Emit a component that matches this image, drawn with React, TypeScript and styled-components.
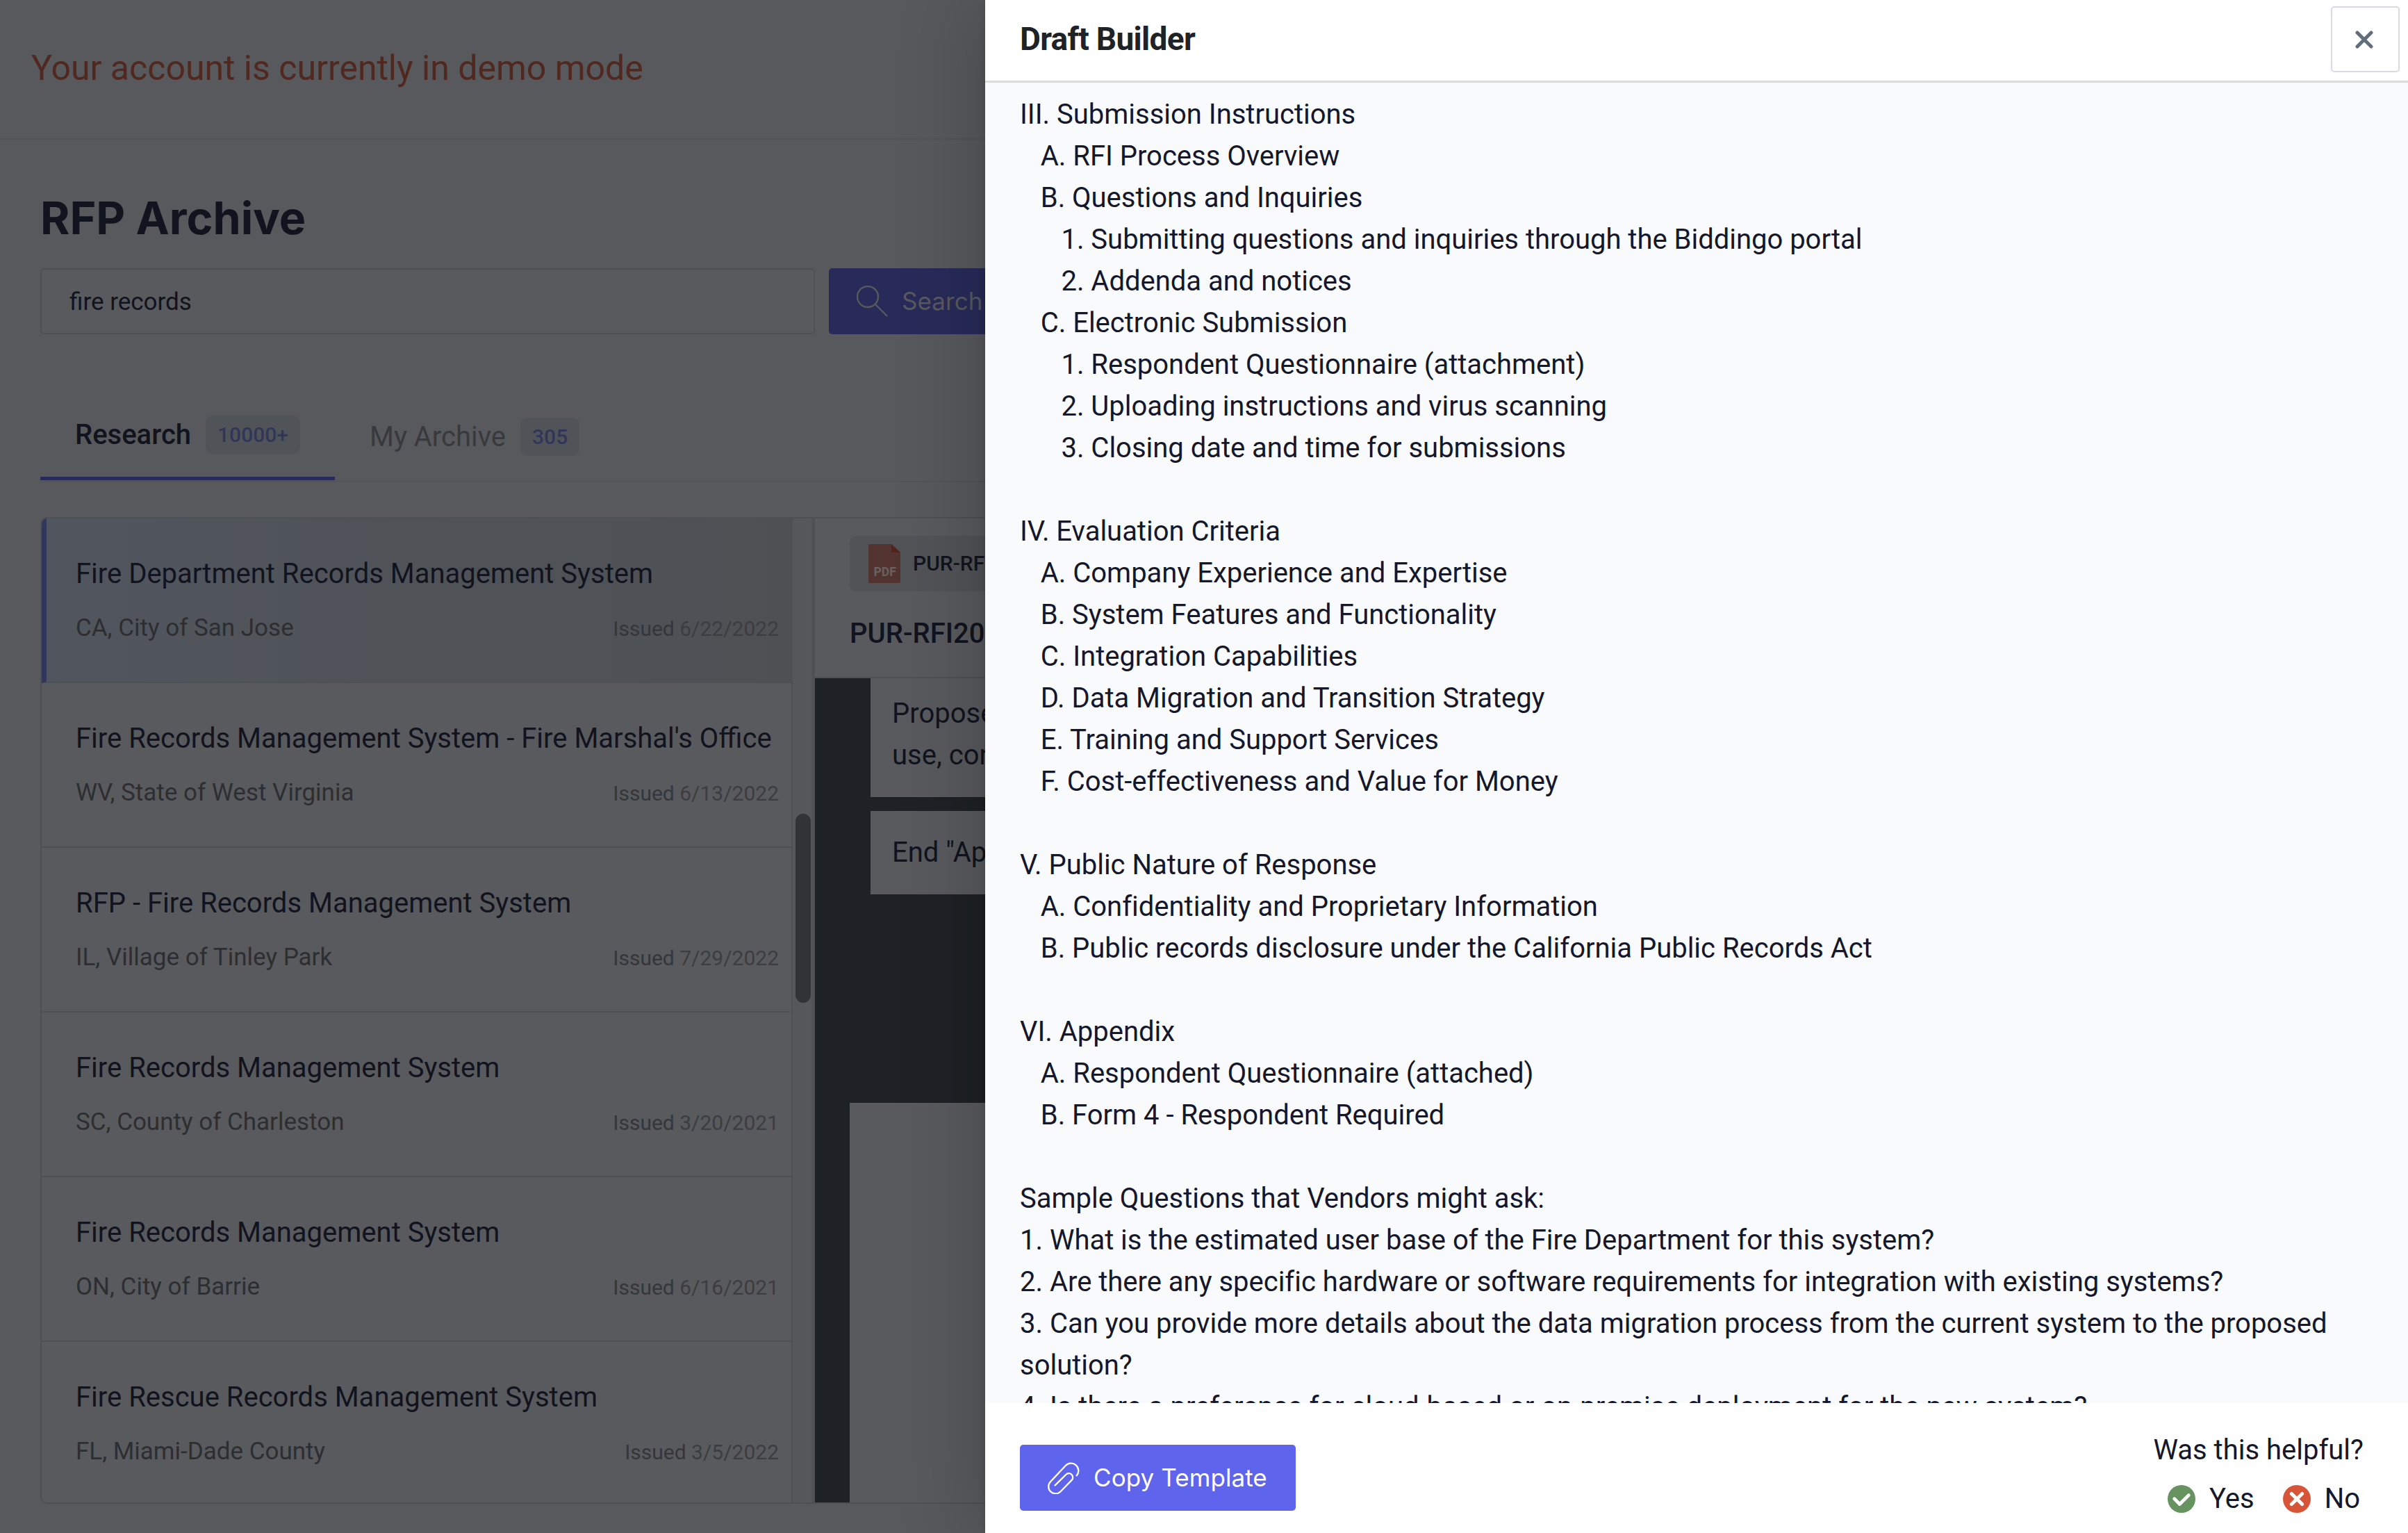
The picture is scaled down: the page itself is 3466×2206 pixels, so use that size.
import React from 'react';
import styled, { createGlobalStyle } from 'styled-components';

const roboto = `Roboto, "Liberation Sans", sans-serif`;
const inter = `Inter, "Liberation Sans", sans-serif`;

const color = {
  page: '#58595c',
  surface: '#595a5d',
  line: '#4f5054',
  ink: '#11131e',
  muted: '#2d2e31',
  faint: '#38393c',
  indigo: '#282b59',
  viewer: '#1e2125',
};

const GlobalStyle = createGlobalStyle`
  *, *::before, *::after { box-sizing: border-box; }
  html, body { margin: 0; padding: 0; }
  body { width: 3466px; height: 2206px; overflow: hidden; background: ${color.page}; font-family: ${roboto}; }
  button, input { font: inherit; margin: 0; }
`;

const Screen = styled.div`
  display: flex;
  width: 3466px;
  height: 2206px;
  overflow: hidden;
`;

const Archive = styled.main`
  width: 1418px;
  flex: none;
  overflow: hidden;
  background: ${color.page};
  color: ${color.ink};
  display: flex;
  flex-direction: column;
`;

const TopBar = styled.header`
  height: 201px;
  flex: none;
  display: flex;
  align-items: center;
  padding: 0 0 3px 45px;
  border-bottom: 2px solid #535457;
`;

const DemoNotice = styled.span`
  font-size: 50px;
  line-height: 60px;
  color: #50281f;
  white-space: nowrap;
`;

const Content = styled.section`
  flex: 1;
  padding: 73px 0 0 58px;
  display: flex;
  flex-direction: column;
`;

const PageTitle = styled.h1`
  margin: 0 0 32px;
  font-family: ${inter};
  font-size: 64.6px;
  line-height: 80px;
  font-weight: 700;
`;

const SearchRow = styled.div`
  display: flex;
  gap: 20px;
  height: 95px;
`;

const SearchInput = styled.input`
  width: 1115px;
  flex: none;
  height: 95px;
  padding: 1px 40px 0;
  border: 2px solid ${color.line};
  border-radius: 5px;
  background: ${color.surface};
  color: ${color.ink};
  font-size: 35px;
  outline: none;
`;

const SolidButton = styled.button<{ $bg: string; $fg: string; $width: number }>`
  flex: none;
  width: ${(p) => p.$width}px;
  height: 95px;
  padding: 0 0 0 40px;
  border: 0;
  border-radius: 5px;
  background: ${(p) => p.$bg};
  color: ${(p) => p.$fg};
  display: flex;
  align-items: center;
  gap: 20px;
  font-family: ${inter};
  font-size: 35px;
  white-space: nowrap;
`;

const ButtonLabel = styled.span`
  line-height: 42px;
  padding-bottom: 2px;
  letter-spacing: 0.08px;
`;

const Tabs = styled.nav`
  margin-top: 81px;
  height: 132px;
  display: flex;
  align-items: flex-start;
  border-bottom: 2px solid #535457;
`;

const Tab = styled.div<{ $active?: boolean }>`
  height: 129px;
  padding: 3px 50px 0;
  display: flex;
  align-items: center;
  gap: 21px;
  font-size: 40px;
  font-weight: ${(p) => (p.$active ? 500 : 400)};
  color: ${(p) => (p.$active ? color.ink : color.faint)};
  border-bottom: ${(p) => (p.$active ? `5px solid ${color.indigo}` : '0')};
  white-space: nowrap;
`;

const Count = styled.span`
  height: 55px;
  padding: 0 17px;
  border-radius: 10px;
  background: #505459;
  color: #313658;
  font-family: ${roboto};
  font-size: 30px;
  line-height: 55px;
  font-weight: 500;
`;

const Panels = styled.div`
  margin-top: 50px;
  width: 1500px;
  height: 1420px;
  display: flex;
  border: 2px solid ${color.line};
  border-radius: 10px;
  overflow: hidden;
  background: ${color.surface};
`;

const ResultList = styled.div`
  width: 1081px;
  flex: none;
  border-right: 2px solid ${color.line};
`;

const Result = styled.article<{ $active?: boolean }>`
  height: 237px;
  padding: 52px 18px 0 ${(p) => (p.$active ? 42 : 49)}px;
  border-bottom: 2px solid ${color.line};
  border-left: ${(p) => (p.$active ? '7px solid #32365a' : '0')};
  background: ${(p) => (p.$active ? 'linear-gradient(90deg, #51555e 0%, #4f5358 50%, #4e5054 100%)' : color.surface)};
`;

const ResultTitle = styled.div`
  font-size: 40px;
  line-height: 56px;
  white-space: nowrap;
`;

const ResultMeta = styled.div`
  margin-top: 23px;
  display: flex;
  align-items: baseline;
  justify-content: space-between;
  font-size: 35px;
  line-height: 54px;
  color: ${color.muted};
`;

const Issued = styled.span`
  font-size: 30px;
  color: #35363a;
`;

const IssuedDate = styled.span`
  color: #3c3d40;
`;

const ScrollTrack = styled.div`
  width: 32px;
  flex: none;
  padding: 425px 0 0 4px;
  background: linear-gradient(90deg, #56575a 0, #57585b 26px, #4f5053 29px, #4f5053 32px);
`;

const ScrollThumb = styled.div`
  width: 22px;
  height: 272px;
  border-radius: 11px;
  background: #323336;
`;

const Preview = styled.div`
  flex: 1;
  display: flex;
  flex-direction: column;
`;

const PreviewHead = styled.div`
  height: 230px;
  flex: none;
  padding: 25px 0 0 50px;
  border-bottom: 2px solid ${color.line};
`;

const FileChip = styled.div`
  height: 80px;
  padding-left: 27px;
  display: flex;
  align-items: center;
  gap: 18px;
  border-radius: 10px;
  background: #525356;
  font-size: 30px;
  line-height: 36px;
  font-weight: 500;
  white-space: nowrap;
`;

const FileTitle = styled.div`
  margin-top: 31px;
  font-size: 40px;
  line-height: 60px;
  font-weight: 500;
  white-space: nowrap;
`;

const Viewer = styled.div`
  flex: 1;
  background: ${color.viewer};
  display: flex;
  flex-direction: column;
`;

const DocBlock = styled.p<{ $height: number; $top: number }>`
  margin: 0 0 20px 80px;
  height: ${(p) => p.$height}px;
  padding: ${(p) => p.$top}px 0 0 31px;
  background: ${color.surface};
  font-size: 40px;
  line-height: 60px;
  white-space: pre;
`;

const DocPage = styled.div`
  margin: 280px 0 0 50px;
  flex: 1;
  background: ${color.surface};
`;

const Drawer = styled.aside`
  position: relative;
  width: 2048px;
  flex: none;
  display: flex;
  flex-direction: column;
  background: #fff;
  color: #15172b;
  box-shadow: 0 0 10px rgba(0, 0, 0, 0.12), -10px 0 110px rgba(0, 0, 0, 0.2);
`;

const DrawerHead = styled.header`
  height: 119px;
  flex: none;
  display: flex;
  justify-content: space-between;
  padding: 9px 12px 0 50px;
  border-bottom: 3px solid #dadbdd;
`;

const DrawerTitle = styled.h2`
  margin: 0;
  font-size: 46px;
  line-height: 94px;
  font-weight: 700;
  letter-spacing: -0.7px;
  color: #1e2327;
`;

const CloseButton = styled.button`
  width: 99px;
  height: 95px;
  padding: 0 4px 0 0;
  display: flex;
  align-items: center;
  justify-content: center;
  background: #fff;
  border: 2px solid #d8dae6;
  border-radius: 5px;
`;

const Draft = styled.div`
  height: 1900px;
  flex: none;
  overflow: hidden;
  padding: 16px 50px 0;
  background: #f9fafc;
  font-size: 40px;
  line-height: 60px;
  letter-spacing: -0.015px;
  white-space: pre-wrap;
`;

const DrawerFoot = styled.footer`
  flex: 1;
  display: flex;
  justify-content: space-between;
  padding: 37px 64px 0 50px;
`;

const FootAction = styled.div`
  padding-top: 23px;
`;

const Feedback = styled.div`
  display: flex;
  flex-direction: column;
  align-items: flex-end;
  padding-top: 1px;
  font-size: 40px;
  line-height: 60px;
`;

const Votes = styled.div`
  display: flex;
  gap: 41px;
  margin-top: 10px;
  padding-right: 5px;
`;

const Vote = styled.span`
  display: flex;
  align-items: center;
  gap: 20px;
`;

const SearchIcon = () => (
  <svg width="45" height="45" viewBox="0 0 45 45" fill="none" stroke="currentColor" strokeWidth="2.4">
    <circle cx="16" cy="16" r="15" />
    <path d="M27 27 43.5 43.5" strokeLinecap="round" />
  </svg>
);

const ClipIcon = () => (
  <svg width="46" height="46" viewBox="0 0 46 46" fill="none" stroke="currentColor" strokeWidth="2.3" strokeLinecap="round">
    <path d="M10.5 33.5 L26.3 18 A5.7 5.7 0 0 1 34.6 25.9 L18.6 42.2 A10 10 0 0 1 4 28.2 L25.6 5.2 A10.6 10.6 0 0 1 41.6 19.4" />
  </svg>
);

const CloseIcon = () => (
  <svg width="26" height="26" viewBox="0 0 26 26" fill="none" stroke="#636c7a" strokeWidth="5" strokeLinecap="round">
    <path d="M3 3 23 23M23 3 3 23" />
  </svg>
);

const CheckBadge = () => (
  <svg width="40" height="40" viewBox="0 0 40 40">
    <circle cx="20" cy="20" r="20" fill="#66935f" />
    <path d="M9.7 19.7 17.3 27.5 30.3 14.6" fill="none" stroke="#fff" strokeWidth="4.8" strokeLinecap="round" strokeLinejoin="round" />
  </svg>
);

const CrossBadge = () => (
  <svg width="40" height="40" viewBox="0 0 40 40">
    <circle cx="20" cy="20" r="20" fill="#d75439" />
    <path d="M12.4 12.4 27.6 27.6M27.6 12.4 12.4 27.6" fill="none" stroke="#fff" strokeWidth="5" strokeLinecap="round" />
  </svg>
);

const PdfIcon = () => (
  <svg width="46" height="56" viewBox="0 0 46 56">
    <path d="M2 0H33L46 12V54a2 2 0 0 1-2 2H2a2 2 0 0 1-2-2V2a2 2 0 0 1 2-2Z" fill="#52332f" />
    <path d="M33 0 46 12H33Z" fill="#50231c" />
    <text x="7.5" y="45.5" fontFamily="Roboto, sans-serif" fontSize="17.5" fontWeight="700" fill="#68625f">PDF</text>
  </svg>
);

const results = [
  { title: 'Fire Department Records Management System', place: 'CA, City of San Jose', date: '6/22/2022' },
  { title: "Fire Records Management System - Fire Marshal's Office", place: 'WV, State of West Virginia', date: '6/13/2022' },
  { title: 'RFP - Fire Records Management System', place: 'IL, Village of Tinley Park', date: '7/29/2022' },
  { title: 'Fire Records Management System', place: 'SC, County of Charleston', date: '3/20/2021' },
  { title: 'Fire Records Management System', place: 'ON, City of Barrie', date: '6/16/2021' },
  { title: 'Fire Rescue Records Management System', place: 'FL, Miami-Dade County', date: '3/5/2022' },
];

const draft = `III. Submission Instructions
   A. RFI Process Overview
   B. Questions and Inquiries
      1. Submitting questions and inquiries through the Biddingo portal
      2. Addenda and notices
   C. Electronic Submission
      1. Respondent Questionnaire (attachment)
      2. Uploading instructions and virus scanning
      3. Closing date and time for submissions

IV. Evaluation Criteria
   A. Company Experience and Expertise
   B. System Features and Functionality
   C. Integration Capabilities
   D. Data Migration and Transition Strategy
   E. Training and Support Services
   F. Cost-effectiveness and Value for Money

V. Public Nature of Response
   A. Confidentiality and Proprietary Information
   B. Public records disclosure under the California Public Records Act

VI. Appendix
   A. Respondent Questionnaire (attached)
   B. Form 4 - Respondent Required

Sample Questions that Vendors might ask:
1. What is the estimated user base of the Fire Department for this system?
2. Are there any specific hardware or software requirements for integration with existing systems?
3. Can you provide more details about the data migration process from the current system to the proposed solution?
4. Is there a preference for cloud-based or on-premise deployment for the new system?`;

export default function App() {
  return (
    <>
      <GlobalStyle />
      <Screen>
        <Archive>
          <TopBar>
            <DemoNotice>Your account is currently in demo mode</DemoNotice>
          </TopBar>
          <Content>
            <PageTitle>RFP Archive</PageTitle>
            <SearchRow>
              <SearchInput defaultValue="fire records" />
              <SolidButton $bg={color.indigo} $fg="#58595c" $width={260}>
                <SearchIcon />
                <ButtonLabel>Search</ButtonLabel>
              </SolidButton>
            </SearchRow>
            <Tabs>
              <Tab $active>
                Research <Count>10000+</Count>
              </Tab>
              <Tab>
                My Archive <Count>305</Count>
              </Tab>
            </Tabs>
            <Panels>
              <ResultList>
                {results.map((r, i) => (
                  <Result key={i} $active={i === 0}>
                    <ResultTitle>{r.title}</ResultTitle>
                    <ResultMeta>
                      <span>{r.place}</span>
                      <Issued>
                        Issued <IssuedDate>{r.date}</IssuedDate>
                      </Issued>
                    </ResultMeta>
                  </Result>
                ))}
              </ResultList>
              <ScrollTrack>
                <ScrollThumb />
              </ScrollTrack>
              <Preview>
                <PreviewHead>
                  <FileChip>
                    <PdfIcon />
                    PUR-RF
                  </FileChip>
                  <FileTitle>PUR-RFI20</FileTitle>
                </PreviewHead>
                <Viewer>
                  <DocBlock $height={171} $top={21}>{'Propose\nuse, con'}</DocBlock>
                  <DocBlock $height={120} $top={30}>End "Ap</DocBlock>
                  <DocPage />
                </Viewer>
              </Preview>
            </Panels>
          </Content>
        </Archive>
        <Drawer>
          <DrawerHead>
            <DrawerTitle>Draft Builder</DrawerTitle>
            <CloseButton aria-label="Close">
              <CloseIcon />
            </CloseButton>
          </DrawerHead>
          <Draft>{draft}</Draft>
          <DrawerFoot>
            <FootAction>
              <SolidButton $bg="#5e65ec" $fg="#ffffff" $width={397}>
                <ClipIcon />
                <ButtonLabel>Copy Template</ButtonLabel>
              </SolidButton>
            </FootAction>
            <Feedback>
              Was this helpful?
              <Votes>
                <Vote>
                  <CheckBadge />
                  Yes
                </Vote>
                <Vote>
                  <CrossBadge />
                  No
                </Vote>
              </Votes>
            </Feedback>
          </DrawerFoot>
        </Drawer>
      </Screen>
    </>
  );
}
